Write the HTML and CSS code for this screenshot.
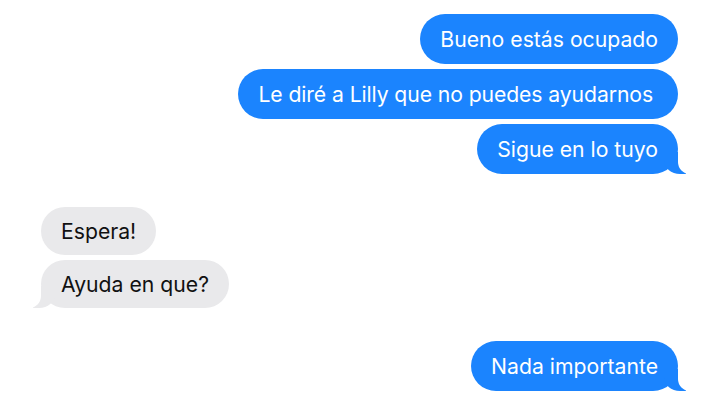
FILE: index.html
```html
<!DOCTYPE html>
<html lang="es">

<head>
    <meta charset="UTF-8" />
    <meta name="viewport" content="width=device-width, initial-scale=1.0" />
    <title>Mensajes</title>
    <link rel="stylesheet" href="styles.css">
</head>

<body>
    <div class="chat">
        <div class="group sent">
            <div class="bubble">Bueno estás ocupado</div>
            <div class="bubble wide">Le diré a Lilly que no puedes ayudarnos</div>
            <div class="bubble tail">Sigue en lo tuyo</div>
        </div>

        <div class="group received">
            <div class="bubble">Espera!</div>
            <div class="bubble tail">Ayuda en que?</div>
        </div>

        <div class="group sent">
            <div class="bubble tail">Nada importante</div>
        </div>
    </div>
</body>

</html>
```

FILE: styles.css
```css
body {
    margin: 0;
    background-color: #fff;
    font-family: Inter, "Liberation Sans", sans-serif;
}

.chat {
    display: flex;
    flex-direction: column;
    gap: 33px;
    padding: 14px 42px 0 41px;
}

.group {
    display: flex;
    flex-direction: column;
    gap: 5px;
}

.sent {
    align-items: flex-end;
}

.received {
    align-items: flex-start;
}

.bubble {
    position: relative;
    height: 50px;
    line-height: 50px;
    padding: 0 20px;
    border-radius: 25px;
    font-size: 21.2px;
    white-space: nowrap;
}

.bubble.wide {
    letter-spacing: -0.1px;
    padding-right: 25px;
}

.sent .bubble {
    background-color: #1b84fe;
    color: #fff;
}

.received .bubble {
    height: 48px;
    line-height: 48px;
    background-color: #e9e9eb;
    color: #111;
}

/* cola de la burbuja */
.bubble.tail::before,
.bubble.tail::after {
    content: "";
    position: absolute;
    bottom: 0;
    height: 22px;
}

.sent .bubble.tail::before {
    right: -8px;
    width: 22px;
    background-color: #1b84fe;
    border-bottom-left-radius: 16px 14px;
}

.sent .bubble.tail::after {
    right: -26px;
    width: 26px;
    background-color: #fff;
    border-bottom-left-radius: 12px;
}

.received .bubble.tail::before {
    left: -8px;
    width: 22px;
    background-color: #e9e9eb;
    border-bottom-right-radius: 16px 14px;
}

.received .bubble.tail::after {
    left: -26px;
    width: 26px;
    background-color: #fff;
    border-bottom-right-radius: 12px;
}
```
